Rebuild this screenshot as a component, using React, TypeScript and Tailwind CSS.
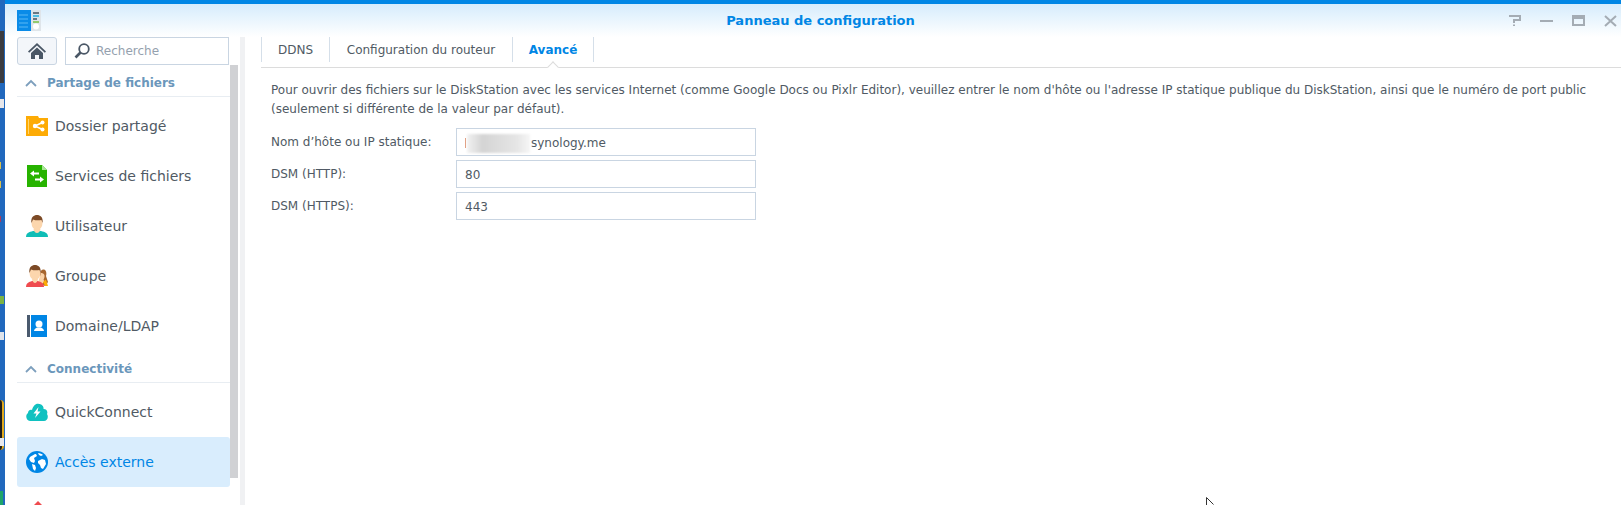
import React from 'react';

const FONT = "font-['DejaVu_Sans',sans-serif]";

const FolderIcon = () => (
    <svg width="22" height="20" viewBox="0 0 22 20">
        <path d="M0 20V0h12l1 2h9v18z" fill="#fdab05" />
        <path d="M2 3h1v15H2z" fill="#ffd56b" />
        <path d="M16.500 6.500 9 10l7.500 3.500" stroke="#fff" strokeWidth="1.500" fill="none" />
        <circle cx="9" cy="10" r="2.200" fill="#fff" />
        <circle cx="16.500" cy="6.500" r="2" fill="#fff" />
        <circle cx="16.500" cy="13.500" r="2" fill="#fff" />
    </svg>
);

const FileServiceIcon = () => (
    <svg width="20" height="22" viewBox="0 0 20 22">
        <path d="M0 0h15l5 5v17H0z" fill="#27b300" />
        <path d="M15 0l5 5h-5z" fill="#a8e596" />
        <path d="M3 8.500 7 5.500v2h5v2H7v2zM17 14.500l-4-3v2H8v2h5v2z" fill="#fff" />
    </svg>
);

const UserIcon = () => (
    <svg width="22" height="22" viewBox="0 0 22 22">
        <path d="M0 22c0-4 3-5 7-6h8c4 1 7 2 7 6z" fill="#10bdb6" />
        <path d="M7.500 15c1 2 2 3 3.500 3s2.500-1 3.500-3l-1-3h-5z" fill="#fcd6ad" />
        <ellipse cx="11" cy="8" rx="5.500" ry="7" fill="#fcd6ad" />
        <path d="M5.500 8C4.500 2 8 0 11 0s6.500 2 5.500 8l-1-3c-3 .5-6 .5-8.500-.5z" fill="#7c4a26" />
    </svg>
);

const GroupIcon = () => (
    <svg width="22" height="22" viewBox="0 0 22 22">
        <path d="M14 9c0-3 2-5 4-4.500S21 8 20 11l2 6-3 4-5-3z" fill="#a8662f" />
        <path d="M15 8c2 0 4 1 3.500 4l-1 3 1 1-3 4-3-4z" fill="#fbd2a7" />
        <path d="M17 17l3-2.500 2 6.500h-3z" fill="#fdab05" />
        <path d="M0 22c0-4 3-5 6-6h6c3 1 6 2 6 6z" fill="#ef4b4f" />
        <path d="M6 15c1 2 2 3 3 3s2-1 3-3l-1-3H7z" fill="#fcd6ad" />
        <ellipse cx="9" cy="8" rx="5.500" ry="7" fill="#fcd6ad" />
        <path d="M3.500 8C2.500 2 6 0 9 0s6.500 2 5.500 8l-1-3c-3 .5-6 .5-8.500-.5z" fill="#7c4a26" />
    </svg>
);

const DomainIcon = () => (
    <svg width="20" height="22" viewBox="0 0 20 22">
        <path d="M0 0h3v22H0z" fill="#4a5a6e" />
        <path d="M4 0h16v22H4z" fill="#0086e5" />
        <circle cx="12" cy="9" r="3.500" fill="#fff" />
        <path d="M7 16c0-2 2-3 3-3.500h4c1 .5 3 1.500 3 3.500z" fill="#fff" />
    </svg>
);

const CloudIcon = () => (
    <svg width="22" height="18" viewBox="0 0 22 18">
        <path d="M4 18C0 18-1 12 2 10c0-2 2-4 4-3 1-4 4-7 7-6 3 0 5 3 4.500 5C21 6 22 9 21 11c2 3 0 7-3 7z" fill="#10c1c0" />
        <path d="M12.500 4 7.500 10.500h3L9 15l5.500-6.500h-3z" fill="#fff" />
    </svg>
);

const GlobeIcon = () => (
    <svg width="22" height="22" viewBox="0 0 22 22">
        <circle cx="11" cy="11" r="11" fill="#0086e5" />
        <path d="M4 6c2-1 4-3 6-3l1 2-3 2 1 3-1 2-3-1-2-3zM12 2c2 0 4 1 5 2l-2 1-2-1zM12 10l4-2 3 1 1 4-3 5-2-1-1-3-2-2zM6 13l3 1 1 3-1 3-2-2z" fill="#fff" />
    </svg>
);

const sections = [
    {
        title: 'Partage de fichiers',
        items: [
            { label: 'Dossier partagé', icon: <FolderIcon /> },
            { label: 'Services de fichiers', icon: <FileServiceIcon /> },
            { label: 'Utilisateur', icon: <UserIcon /> },
            { label: 'Groupe', icon: <GroupIcon /> },
            { label: 'Domaine/LDAP', icon: <DomainIcon /> },
        ],
    },
    {
        title: 'Connectivité',
        items: [
            { label: 'QuickConnect', icon: <CloudIcon /> },
            { label: 'Accès externe', icon: <GlobeIcon />, active: true },
        ],
    },
];

const tabs = [
    { label: 'DDNS', width: 'w-[69px]' },
    { label: 'Configuration du routeur', width: 'w-[183px]' },
    { label: 'Avancé', width: 'w-[81px]', active: true },
];

const fields = [
    { label: 'Nom d’hôte ou IP statique:', value: 'synology.me', blurred: true },
    { label: 'DSM (HTTP):', value: '80' },
    { label: 'DSM (HTTPS):', value: '443' },
];

const Sidebar = () => (
    <div className="w-[225px] shrink-0 pl-3">
        <div className="flex h-[28px] gap-2">
            <div className="flex w-10 items-center justify-center rounded-[3px] border border-[#c9d5e2] bg-[#f3f6fa]">
                <svg width="18" height="16" viewBox="0 0 18 16">
                    <path d="M9 0 0 8.500l1.200 1.200L9 2.500l7.800 7.200L18 8.500z" fill="#4a5766" />
                    <path d="M3 10 9 4.500 15 10v6h-4v-4H7v4H3z" fill="#4a5766" />
                </svg>
            </div>
            <div className="flex w-[164px] items-center gap-[6px] border border-[#c9d5e2] bg-white pl-[8px]">
                <svg width="16" height="16" viewBox="0 0 16 16">
                    <circle cx="10" cy="6" r="4.800" fill="none" stroke="#4a5766" strokeWidth="1.800" />
                    <path d="M6.500 9.500 1.500 14.500" stroke="#4a5766" strokeWidth="2.600" />
                </svg>
                <span className="text-[12px] text-[#95a1ae]">Recherche</span>
            </div>
        </div>
        {sections.map(section => (
            <div key={section.title}>
                <div className="mt-[4px] flex h-[28px] items-center gap-[10px] border-b border-[#e8edf2] pl-2 text-[12px] font-bold text-[#6b97bb]">
                    <svg width="12" height="8" viewBox="0 0 12 8">
                        <path d="M1 7l5-5 5 5" fill="none" stroke="#7d9fbd" strokeWidth="1.800" />
                    </svg>
                    {section.title}
                </div>
                <div className="pt-[4px]">
                    {section.items.map(item => (
                        <div
                            key={item.label}
                            className={`flex h-[50px] items-center rounded-[3px] text-[14px] ${item.active ? 'bg-[#d9edfd] text-[#0086e5]' : 'text-[#505a64]'}`}
                        >
                            <span className="flex w-[38px] shrink-0 justify-center pl-[1px]">{item.icon}</span>
                            {item.label}
                        </div>
                    ))}
                </div>
            </div>
        ))}
        <div className="mt-[14px] pl-[13px]">
            <svg width="16" height="18" viewBox="0 0 16 18">
                <path d="M8 0 15 7H1z" fill="#ef4b4f" />
                <path d="M3 7h10v11H3z" fill="#f7787b" />
            </svg>
        </div>
    </div>
);

const Content = () => (
    <div className="min-w-0 flex-1 pl-[16px]">
        <div className="relative flex h-[31px] items-start border-b border-[#dcdcdc]">
            {tabs.map((tab, i) => (
                <div
                    key={tab.label}
                    className={`flex h-[25px] items-center justify-center border-r border-[#d5dfe9] text-[12px] ${i === 0 ? 'border-l' : ''} ${tab.width} ${tab.active ? 'font-bold text-[#0086e5]' : 'text-[#505a64]'}`}
                >
                    {tab.label}
                </div>
            ))}
            <div className="absolute left-[288px] top-[26px] size-[8px] rotate-45 border-l border-t border-[#dcdcdc] bg-white" />
        </div>
        <p className="mt-[13px] pl-[10px] pr-4 text-[12px] leading-[19px] text-[#505a64]">
            Pour ouvrir des fichiers sur le DiskStation avec les services Internet (comme Google Docs ou Pixlr Editor), veuillez entrer le nom d'hôte ou l'adresse IP statique publique du DiskStation, ainsi que le numéro de port public (seulement si différente de la valeur par défaut).
        </p>
        <div className="mt-[9px] flex flex-col gap-[4px] pl-[10px]">
            {fields.map(field => (
                <div key={field.label} className="flex h-[28px] items-start text-[12px] text-[#505a64]">
                    <label className="w-[185px] shrink-0 pt-[5px]">{field.label}</label>
                    <div className="flex h-[28px] w-[300px] items-center border border-[#c9d5e2] bg-white pl-2 pt-[2px]">
                        {field.blurred && (
                            <>
                                <span className="h-[10px] w-[1px] bg-[#e09a7c]" />
                                <span className="mx-[1px] h-[19px] w-[63px] bg-[linear-gradient(90deg,#f2f2f2_0,#d4d4d4_25%,#dedede_55%,#e6e6e6_80%,#f6f6f6_100%)] blur-[1px]" />
                            </>
                        )}
                        {field.value}
                    </div>
                </div>
            ))}
        </div>
    </div>
);

const App: React.FC = () => (
    <div className={`relative flex h-[505px] w-[1621px] overflow-hidden bg-white ${FONT}`}>
        {/* bit of desktop left of the window */}
        <div className="relative w-[5px] shrink-0 bg-[#2168bd]">
            <div className="absolute left-0 top-[31px] h-[52px] w-[4px] bg-[#3a3b40]" />
            <div className="absolute left-0 top-[99px] h-[9px] w-[4px] bg-[#e6e6ea]" />
            <div className="absolute left-0 top-[162px] h-[7px] w-[1px] bg-[#d8c04c]" />
            <div className="absolute left-0 top-[181px] h-[7px] w-[1px] bg-[#d8c04c]" />
            <div className="absolute left-0 top-[216px] h-[6px] w-[1px] bg-[#a83b5c]" />
            <div className="absolute left-0 top-[296px] h-[8px] w-[4px] bg-[#7cb342]" />
            <div className="absolute left-0 top-[332px] h-[8px] w-[4px] bg-[#dfe3ea]" />
            <div className="absolute left-0 top-[400px] h-[50px] w-[4px] rounded-r-full border-r-2 border-[#e0a81c] bg-[#1c1c1c]" />
            <div className="absolute left-0 top-[438px] h-[8px] w-[4px] bg-[#e8e8ec]" />
            <div className="absolute left-0 top-[491px] h-[14px] w-[3px] bg-[#1fa56a]" />
        </div>
        <div className="flex min-w-0 flex-1 flex-col">
            <div className="h-[4px] bg-[#0086e5]" />
            <div className="flex h-[33px] items-center bg-[linear-gradient(#d6ecfc,#ffffff)] pl-[12px] pr-[4px]">
                <svg width="24" height="21" viewBox="0 0 24 21">
                    <path d="M0 0h14v21H0z" fill="#0a8be8" />
                    <path d="M2 5h9M2 9h9M2 13h9M2 17h9" stroke="#5bb8f5" strokeWidth="1" />
                    <path d="M14 0h10v21H14z" fill="#dfe5ea" />
                    <path d="M16 3h6" stroke="#44525f" strokeWidth="1.500" />
                    <path d="M16 6h6" stroke="#22b0e0" strokeWidth="1.500" />
                    <path d="M16 9h4" stroke="#44525f" strokeWidth="1.500" />
                    <path d="M16 12h6" stroke="#7ac143" strokeWidth="1.500" />
                    <circle cx="19" cy="16.500" r="3" fill="#fff" />
                </svg>
                <div className="flex-1 pl-[92px] text-center text-[13px] font-bold text-[#0086e5]">Panneau de configuration</div>
                <div className="flex items-center gap-[19px]">
                    <svg width="13" height="11" viewBox="0 0 13 11">
                        <path d="M1 1h11v4H6v3M6 9.500V11" fill="none" stroke="#a4acb4" strokeWidth="2" />
                    </svg>
                    <span className="h-[2px] w-[13px] bg-[#a4acb4]" />
                    <span className="h-[11px] w-[13px] border-x-2 border-b-2 border-t-[4px] border-[#a4acb4]" />
                    <svg width="13" height="12" viewBox="0 0 13 12">
                        <path d="M1 1l11 10M12 1 1 11" stroke="#a4acb4" strokeWidth="2" />
                    </svg>
                </div>
            </div>
            <div className="flex min-h-0 flex-1">
                <Sidebar />
                <div className="mt-[28px] h-[413px] w-[8px] shrink-0 bg-[#d0d1d4]" />
                <div className="ml-[2px] h-full w-[5px] shrink-0 bg-[#f0f1f3]" />
                <Content />
            </div>
        </div>
        {/* mouse pointer */}
        <svg className="absolute left-[1206px] top-[497px]" width="10" height="8" viewBox="0 0 10 8">
            <path d="M.5.500v7.500M.5.500 7.500 7.500" fill="none" stroke="#333" strokeWidth="1" />
        </svg>
    </div>
);

export default App;
